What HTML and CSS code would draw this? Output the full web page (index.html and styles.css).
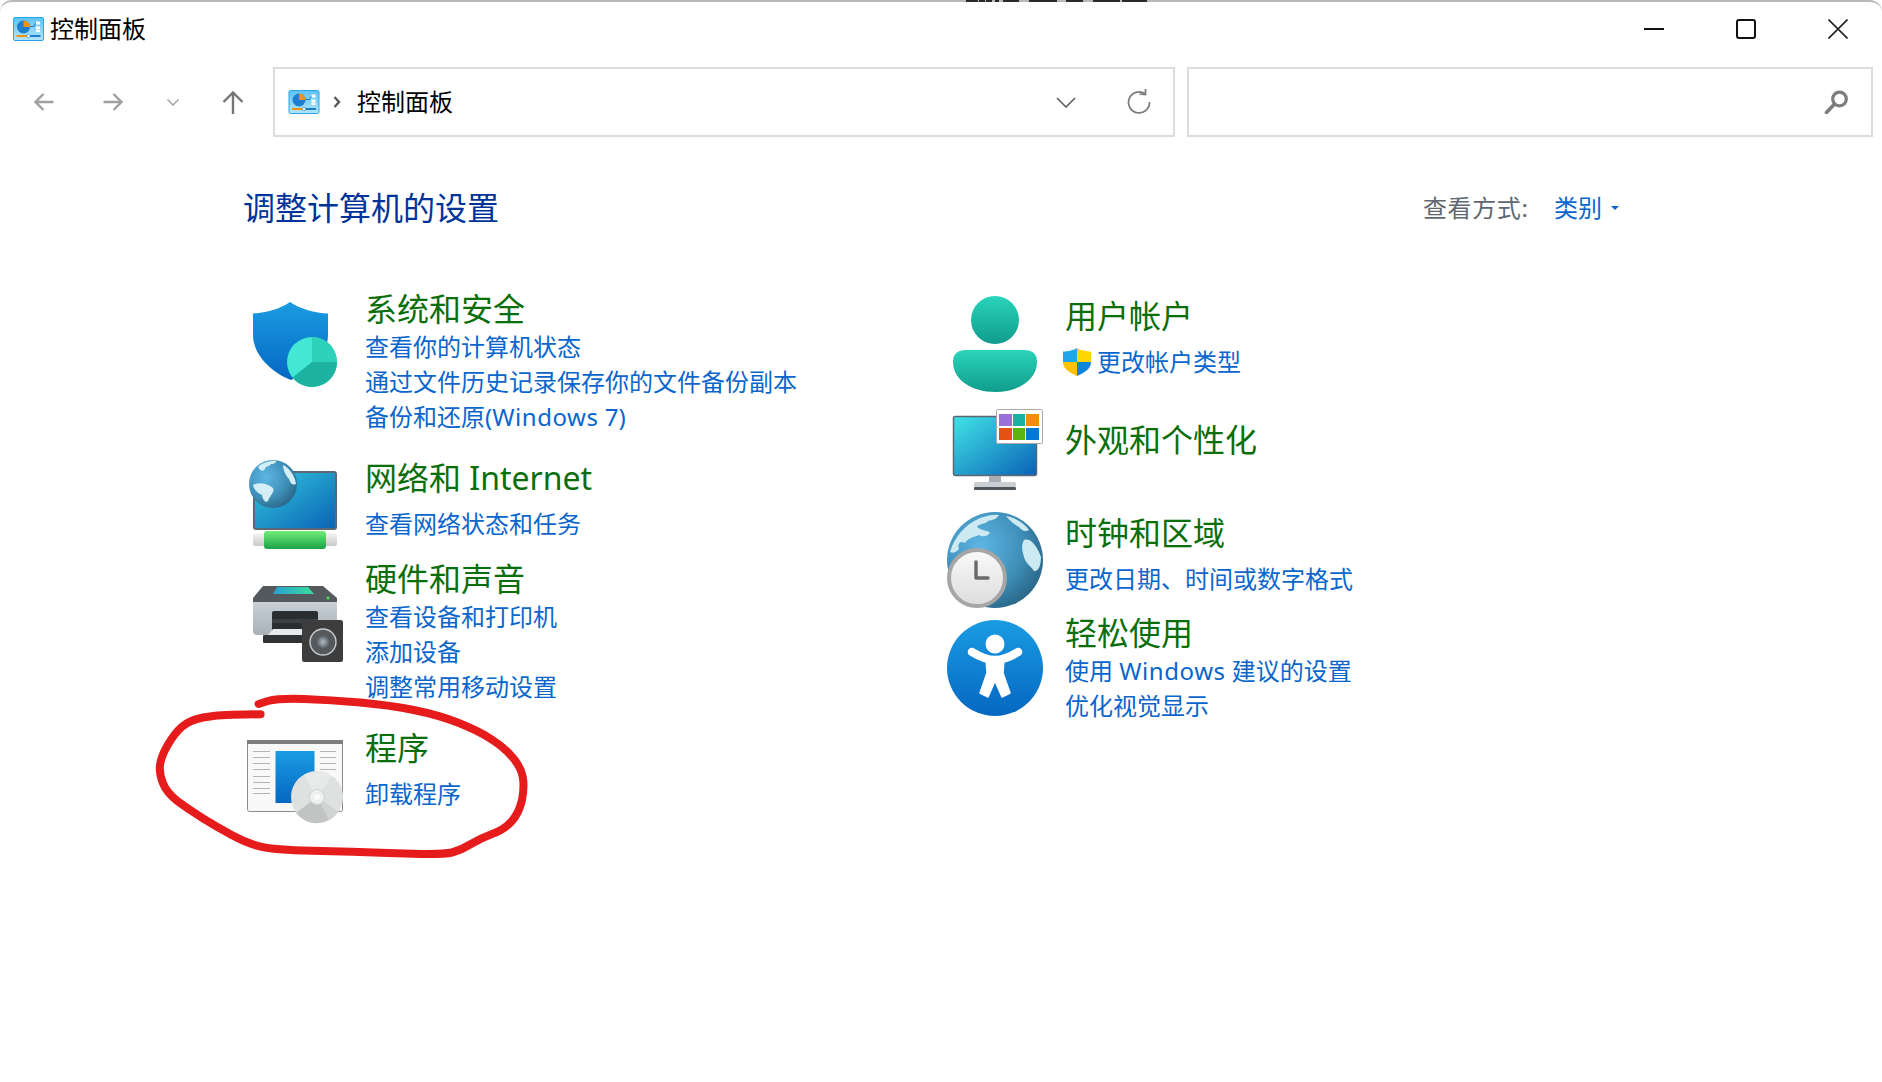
FILE: index.html
```html
<!DOCTYPE html>
<html lang="zh-CN">
<head>
<meta charset="utf-8">
<title>控制面板</title>
<link rel="stylesheet" href="styles.css">
</head>
<body>
<svg class="defs" width="0" height="0" aria-hidden="true">
  <defs>
    <linearGradient id="cpBg" x1="0" y1="0" x2="0" y2="1"><stop offset="0" stop-color="#5cc4f5"/><stop offset="1" stop-color="#b4e4f8"/></linearGradient>
    <linearGradient id="blueV" x1="0" y1="0" x2="0" y2="1"><stop offset="0" stop-color="#1a9ce2"/><stop offset="1" stop-color="#0567c2"/></linearGradient>
    <linearGradient id="screen" x1="0" y1="0" x2="1" y2="1"><stop offset="0" stop-color="#33c8dc"/><stop offset="1" stop-color="#0a62b6"/></linearGradient>
    <linearGradient id="screen2" x1="0" y1="0" x2="1" y2="1"><stop offset="0" stop-color="#40e4e6"/><stop offset="1" stop-color="#0a62b6"/></linearGradient>
    <linearGradient id="teal" x1="0" y1="0" x2="0" y2="1"><stop offset="0" stop-color="#2ad4bb"/><stop offset="1" stop-color="#109c8c"/></linearGradient>
    <linearGradient id="green" x1="0" y1="0" x2="0" y2="1"><stop offset="0" stop-color="#72ec74"/><stop offset="1" stop-color="#1ca24a"/></linearGradient>
    <linearGradient id="silver" x1="0" y1="0" x2="0" y2="1"><stop offset="0" stop-color="#f6f6f6"/><stop offset="1" stop-color="#c8c8c8"/></linearGradient>
    <linearGradient id="printBody" x1="0" y1="0" x2="0" y2="1"><stop offset="0" stop-color="#c8d0d6"/><stop offset="1" stop-color="#a9b1b8"/></linearGradient>
    <linearGradient id="printScreen" x1="0" y1="0" x2="1" y2="0"><stop offset="0" stop-color="#2a9fd0"/><stop offset="1" stop-color="#3bdc9c"/></linearGradient>
    <radialGradient id="cone"><stop offset="0" stop-color="#b0bcc4"/><stop offset="1" stop-color="#50565a"/></radialGradient>
    <radialGradient id="globe" cx="0.35" cy="0.35" r="0.8"><stop offset="0" stop-color="#5cb6e4"/><stop offset="0.55" stop-color="#3f8fb8"/><stop offset="1" stop-color="#235a78"/></radialGradient>
    <linearGradient id="clockFace" x1="0" y1="0" x2="0" y2="1"><stop offset="0" stop-color="#fafafa"/><stop offset="1" stop-color="#dcdcdc"/></linearGradient>
    <symbol id="cp-icon" viewBox="0 0 31 24">
      <rect x="0.5" y="0.5" width="30" height="23" rx="1.5" fill="url(#cpBg)" stroke="#2ba4e8"/>
      <circle cx="10.5" cy="10" r="6.5" fill="#1c7fd0"/>
      <path d="M10.500 10V3.500A6.500 6.500 0 0 1 17 10Z" fill="#f0920e"/>
      <path d="M17 9.500h4l1.500-3h2.500" fill="none" stroke="#1c7fd0"/>
      <rect x="23" y="4.500" width="4" height="3" fill="#fff"/>
      <rect x="23" y="9.500" width="4" height="3" fill="#fff"/>
      <rect x="23" y="13" width="4" height="2" fill="#fff"/>
      <rect x="3.500" y="18" width="12" height="2" fill="#f0920e"/>
      <rect x="16" y="18" width="11.500" height="2" fill="#1c7fd0"/>
      <circle cx="15.500" cy="19" r="1.700" fill="#fff" stroke="#1c7fd0" stroke-width="0.600"/>
    </symbol>
  </defs>
</svg>

<div class="window">
  <div class="top-strip"></div>

  <header class="titlebar">
    <div class="title-left">
      <svg class="cp-small"><use href="#cp-icon"/></svg>
      <span class="title-text">控制面板</span>
    </div>
    <div class="win-controls">
      <svg class="win-btn" viewBox="0 0 20 20"><path d="M0 10H20" stroke="#111" stroke-width="2"/></svg>
      <svg class="win-btn" viewBox="0 0 20 20"><rect x="1" y="1" width="18" height="18" rx="2" fill="none" stroke="#111" stroke-width="2"/></svg>
      <svg class="win-btn" viewBox="0 0 20 20"><path d="M0.500 0.500L19.500 19.500M19.500 0.500L0.500 19.500" stroke="#222" stroke-width="1.600"/></svg>
    </div>
  </header>

  <nav class="navbar">
    <div class="nav-btns">
      <svg class="nav-ic" width="20" height="20" viewBox="0 0 20 20"><path d="M19.500 10H1.500M9.500 2L1.500 10L9.500 18" fill="none" stroke="#a0a0a0" stroke-width="2.400"/></svg>
      <svg class="nav-ic" width="20" height="20" viewBox="0 0 20 20"><path d="M0.500 10H18.500M10.500 2L18.500 10L10.500 18" fill="none" stroke="#a0a0a0" stroke-width="2.400"/></svg>
      <svg class="nav-ic" width="12" height="7" viewBox="0 0 12 7"><path d="M0.500 0.500L6 6L11.500 0.500" fill="none" stroke="#a3a3a3" stroke-width="1.500"/></svg>
      <svg class="nav-ic" width="22" height="23" viewBox="0 0 22 23"><path d="M11 23V2M1.500 11L11 1.500L20.500 11" fill="none" stroke="#767676" stroke-width="2.400"/></svg>
    </div>
    <div class="address">
      <svg class="cp-addr"><use href="#cp-icon"/></svg>
      <svg class="crumb" width="8" height="12" viewBox="0 0 8 12"><path d="M1.500 1L6 6L1.500 11" fill="none" stroke="#5a5a5a" stroke-width="2.400"/></svg>
      <span class="addr-text">控制面板</span>
      <svg class="addr-chev" width="20" height="11" viewBox="0 0 20 11"><path d="M1 1L10 10L19 1" fill="none" stroke="#5f5f5f" stroke-width="1.600"/></svg>
      <svg class="refresh" width="24" height="24" viewBox="0 0 24 24"><path d="M18 3.800A10.500 10.500 0 1 0 22.500 12" fill="none" stroke="#7a7a7a" stroke-width="1.700"/><path d="M12.500 3.500L18.500 4V-1.500" transform="translate(0 0.500)" fill="none" stroke="#7a7a7a" stroke-width="1.700"/></svg>
    </div>
    <div class="search">
      <svg class="search-ic" width="26" height="24" viewBox="0 0 26 24"><circle cx="15.500" cy="9" r="6.800" fill="none" stroke="#7d7d7d" stroke-width="3.200"/><path d="M10.500 14L2.500 22.500" stroke="#7d7d7d" stroke-width="3.600" stroke-linecap="round"/></svg>
    </div>
  </nav>

  <main class="content">
    <div class="head-row">
      <h1 class="page-title">调整计算机的设置</h1>
      <div class="view-by">
        <span class="view-label">查看方式:</span>
        <a class="view-value">类别</a>
        <span class="view-caret"></span>
      </div>
    </div>

    <div class="columns">
      <section class="col col-left">
        <article class="cat gap-24">
          <svg class="cat-icon" viewBox="0 0 105 90">
            <path d="M46 13C36 20 22 24 9 24.500V46C9 64 25 82 47 91C69 82 84 64 84 46V24.500C71 24 56 20 46 13Z" fill="url(#blueV)"/>
            <circle cx="68" cy="73" r="25" fill="#42e8d3"/>
            <path d="M68 73V48A25 25 0 0 1 93 73Z" fill="#2ed1ba"/>
            <path d="M68 73H93A25 25 0 0 1 48.400 88.500Z" fill="#1db3a0"/>
          </svg>
          <div class="cat-text">
            <a class="cat-title">系统和安全</a>
            <a class="link">查看你的计算机状态</a>
            <a class="link">通过文件历史记录保存你的文件备份副本</a>
            <a class="link">备份和还原(<span class="latin">Windows</span> 7)</a>
          </div>
        </article>

        <article class="cat gap-11">
          <svg class="cat-icon" viewBox="0 0 105 90">
            <rect x="10" y="14" width="82" height="57" rx="2" fill="url(#screen)" stroke="#5b6874" stroke-width="2"/>
            <rect x="9" y="75" width="84" height="13" rx="2" fill="url(#silver)"/>
            <rect x="20" y="73" width="62" height="18" rx="3" fill="url(#green)"/>
            <circle cx="29" cy="26" r="24" fill="url(#globe)"/>
            <path d="M14 9C18 5 24 3 31 2.500C34 4 30 6 27 6C25 9 21 8 21 11C19 14 16 13 14 9ZM9 27C15 24 23 25 29 30C31 34 26 37 24 43C21 45 19 42 18 37C14 35 10 32 9 27ZM39 7C44 9 51 17 52 26C48 28 46 24 45 21C42 18 39 12 39 7Z" fill="#d4eef6"/>
          </svg>
          <div class="cat-text">
            <a class="cat-title">网络和 Internet</a>
            <a class="link link-first">查看网络状态和任务</a>
          </div>
        </article>

        <article class="cat gap-24">
          <svg class="cat-icon" viewBox="0 0 105 90">
            <path d="M19 27H79L93 39V43H9V39Z" fill="#54595e"/>
            <path d="M33 28H64L70 35H29Z" fill="url(#printScreen)"/>
            <circle cx="84" cy="39" r="1.600" fill="#3de04a"/>
            <path d="M9 43H93V72Q93 76 89 76H13Q9 76 9 72Z" fill="url(#printBody)"/>
            <rect x="28" y="52" width="46" height="24" rx="2" fill="#2a2e31"/>
            <rect x="28" y="60" width="46" height="4" fill="#3b4043"/>
            <path d="M29 70H59V76H24Z" fill="#e8e8e8"/>
            <rect x="19" y="76" width="42" height="8" rx="1" fill="#2f3335"/>
            <rect x="58" y="61" width="41" height="42" rx="2.500" fill="#3d3d3e"/>
            <circle cx="79" cy="83" r="13" fill="#55595c" stroke="#c6ccd0" stroke-width="1.400"/>
            <circle cx="79" cy="83" r="7" fill="url(#cone)"/>
          </svg>
          <div class="cat-text">
            <a class="cat-title">硬件和声音</a>
            <a class="link">查看设备和打印机</a>
            <a class="link">添加设备</a>
            <a class="link">调整常用移动设置</a>
          </div>
        </article>

        <article class="cat">
          <svg class="cat-icon" viewBox="0 0 105 90">
            <rect x="3.500" y="12.500" width="95" height="71" rx="2" fill="#f8f8f8" stroke="#8c8c8c"/>
            <rect x="3" y="12" width="96" height="4" fill="#7c7e7f"/>
            <path d="M9 23.500H26M9 29.500H26M9 35.500H26M9 41.500H26M9 48.500H26M9 54.500H26M9 60.500H26M9 65.500H26M76 23.500H92M76 29.500H92M76 35.500H92M76 41.500H92" stroke="#b4b4b4"/>
            <rect x="31.500" y="23" width="39" height="52" fill="url(#blueV)"/>
            <circle cx="73" cy="69" r="26" fill="#dfe1e1"/>
            <path d="M73 69L52 85A26 26 0 0 0 94 84Z" fill="#c2c4c4"/>
            <path d="M73 69L85 92A26 26 0 0 0 94 84Z" fill="#d2d4d4"/>
            <path d="M73 69L60 47A26 26 0 0 1 88 48Z" fill="#e8eaea"/>
            <circle cx="73" cy="69" r="7.500" fill="#eef0f0" stroke="#d0d2d2"/>
            <circle cx="73" cy="69" r="3" fill="#fafafa"/>
          </svg>
          <div class="cat-text">
            <a class="cat-title">程序</a>
            <a class="link link-first">卸载程序</a>
          </div>
        </article>
      </section>

      <section class="col col-right">
        <article class="cat gap-34">
          <svg class="cat-icon" viewBox="0 0 105 90">
            <circle cx="51" cy="24" r="24" fill="url(#teal)"/>
            <path d="M22 54H80Q93 54 93 66C93 84 74 96 51 96C28 96 9 84 9 66Q9 54 22 54Z" fill="url(#teal)"/>
          </svg>
          <div class="cat-text">
            <a class="cat-title">用户帐户</a>
            <a class="link link-shield">
              <svg class="uac" width="28" height="28" viewBox="0 0 28 28">
                <path d="M14 0C11 2 5 3.500 0 3.500V14H14Z" fill="#1ea6ea"/>
                <path d="M14 0C17 2 23 3.500 28 3.500V14H14Z" fill="#ffd600"/>
                <path d="M0 14H14V28C7 25 0 21 0 14Z" fill="#ffc200"/>
                <path d="M28 14H14V28C21 25 28 21 28 14Z" fill="#0f84da"/>
              </svg>
              <span>更改帐户类型</span>
            </a>
          </div>
        </article>

        <article class="cat gap-3">
          <svg class="cat-icon" viewBox="0 0 105 90">
            <rect x="9.500" y="-3.500" width="83" height="59" rx="2" fill="url(#screen2)" stroke="#5b6874" stroke-width="1.500"/>
            <rect x="45" y="56" width="12" height="7" fill="#a6aeb4"/>
            <rect x="30" y="62" width="42" height="5" rx="1.500" fill="#c8ced2"/>
            <rect x="30" y="67" width="42" height="3" rx="1" fill="#4e5458"/>
            <rect x="52.500" y="-10.500" width="46" height="34" rx="1" fill="#fff" stroke="#a8a8a8"/>
            <rect x="55" y="-6" width="13" height="12" fill="#9a70d8"/>
            <rect x="69" y="-6" width="12" height="12" fill="#17b2a2"/>
            <rect x="82" y="-6" width="13" height="12" fill="#f48d06"/>
            <rect x="55" y="8" width="13" height="12" fill="#e55214"/>
            <rect x="69" y="8" width="12" height="12" fill="#5bb40f"/>
            <rect x="82" y="8" width="13" height="12" fill="#0078d6"/>
          </svg>
          <div class="cat-text">
            <a class="cat-title">外观和个性化</a>
          </div>
        </article>

        <article class="cat gap-10">
          <svg class="cat-icon" viewBox="0 0 105 90">
            <circle cx="51" cy="47" r="48" fill="url(#globe)"/>
            <path d="M6 39C10 25 20 12 36 5C44 2 52 1 55 2C53 6 48 7 44 8C41 12 35 10 33 14C38 18 43 17 46 20C43 24 38 24 35 22C30 24 24 25 21 30C16 27 13 31 15 36C12 39 9 41 6 39ZM62 3C70 4 80 10 85 17C82 19 78 18 75 14C71 12 66 8 62 3ZM80 27C86 25 92 31 97 44C97 53 94 59 90 58C87 53 82 51 80 44C78 37 77 32 80 27Z" fill="#cdeaf3"/>
            <circle cx="33" cy="65" r="28" fill="url(#clockFace)" stroke="#a6a6a6" stroke-width="4"/>
            <path d="M32 49V65H44" fill="none" stroke="#6a6a6a" stroke-width="3.400" stroke-linejoin="round" stroke-linecap="round"/>
          </svg>
          <div class="cat-text">
            <a class="cat-title">时钟和区域</a>
            <a class="link link-first">更改日期、时间或数字格式</a>
          </div>
        </article>

        <article class="cat">
          <svg class="cat-icon" viewBox="0 0 105 90">
            <circle cx="51" cy="55" r="48" fill="url(#blueV)"/>
            <circle cx="51" cy="31" r="9.500" fill="#fff"/>
            <path d="M28 39Q41 47 51 47Q61 47 74 39" fill="none" stroke="#fff" stroke-width="8.500" stroke-linecap="round"/>
            <path d="M42 46H60L59 60L66 80L58 84L51 68L44 84L36 80L43 60Z" fill="#fff" stroke="#fff" stroke-width="1.500" stroke-linejoin="round"/>
          </svg>
          <div class="cat-text">
            <a class="cat-title">轻松使用</a>
            <a class="link">使用 <span class="latin">Windows</span> 建议的设置</a>
            <a class="link">优化视觉显示</a>
          </div>
        </article>
      </section>
    </div>
  </main>

  <svg class="annotation" viewBox="0 0 1882 1082" aria-hidden="true">
    <path d="M260.600 714.300L232 714.700Q216.500 715 203 717.500Q189.800 720 182 726.700Q174.400 733.300 167.700 745Q161 756.700 160 765Q159 773.300 163 783.300Q166.800 793.300 178.300 801.700Q189.800 810 203 818.300Q216.500 826.700 231.700 835Q247 843.300 260.500 846.700Q274 850 312 850.800Q350.500 851.700 396 853.300Q442 855 452 852.500Q461.500 850 471 844Q480.600 838.300 492 834Q503.600 830 511.300 821.700Q519 813.300 522 800Q524.600 786.700 522.700 776.700Q520.800 766.700 512 756.700Q503.600 746.700 490 738.300Q476.800 730 457.600 722.500Q438.500 715 413.600 710Q388.800 705 360 702.500Q331 700 304 699Q277.800 698.300 268 701L258.600 704" fill="none" stroke="#e61c1c" stroke-width="8" stroke-linecap="round" stroke-linejoin="round"/>
  </svg>
</div>
</body>
</html>
```

FILE: styles.css
```css
* { box-sizing: border-box; }

html, body {
  margin: 0;
  height: 100%;
  background: #fff;
  overflow: hidden;
}

body {
  font-family: "Noto Sans", "Noto Sans CJK SC", sans-serif;
  color: #000;
}

.defs { position: absolute; }

.window {
  position: relative;
  height: 1082px;
  background: #fff;
  border-top: 2px solid #b9b9b9;
  border-radius: 12px 12px 0 0;
}

.top-strip {
  position: absolute;
  top: -2px;
  left: 966px;
  width: 181px;
  height: 2px;
  background: linear-gradient(90deg,
    #2a2a2a 0 12px, #b9b9b9 12px 13px, #2a2a2a 13px 19px, #b9b9b9 19px 20px,
    #2a2a2a 20px 26px, #b9b9b9 26px 29px, #2a2a2a 29px 33px, #b9b9b9 33px 37px,
    #2a2a2a 37px 53px, #b9b9b9 53px 63px, #2a2a2a 63px 91px, #b9b9b9 91px 100px,
    #2a2a2a 100px 117px, #b9b9b9 117px 127px, #2a2a2a 127px 154px, #b9b9b9 154px 156px,
    #2a2a2a 156px 181px);
}

/* title bar */
.titlebar {
  height: 54px;
  display: flex;
  align-items: center;
  justify-content: space-between;
  padding: 0 34px 0 13px;
}

.title-left {
  display: flex;
  align-items: center;
  gap: 6px;
}

.cp-small { width: 31px; height: 24px; }

.title-text {
  font-size: 24px;
  line-height: 32px;
}

.win-controls {
  display: flex;
  align-items: center;
  gap: 72px;
}

.win-btn { width: 20px; height: 20px; display: block; }

/* navigation bar */
.navbar {
  margin-top: 11px;
  height: 70px;
  display: flex;
  padding: 0 9px 0 10px;
}

.nav-btns {
  flex: none;
  width: 263px;
  display: grid;
  grid-template-columns: 68px 70px 50px 70px;
  align-items: center;
  justify-items: center;
}

.nav-ic { display: block; }

.address {
  flex: none;
  width: 902px;
  display: flex;
  align-items: center;
  border: 2px solid #dcdcdc;
  padding: 0 22px 0 13px;
}

.cp-addr { width: 32px; height: 24px; }

.crumb { margin-left: 13px; }

.addr-text {
  margin-left: 16px;
  font-size: 24px;
  line-height: 32px;
}

.addr-chev { margin-left: auto; }

.refresh { margin-left: 51px; overflow: visible; }

.search {
  flex: none;
  width: 686px;
  margin-left: 12px;
  display: flex;
  align-items: center;
  justify-content: flex-end;
  border: 2px solid #dcdcdc;
  padding: 0 21px 0 0;
}

/* content */
.content {
  padding: 49px 0 0 244px;
}

.head-row {
  display: flex;
  align-items: center;
  justify-content: space-between;
  height: 44px;
  padding-right: 263px;
}

.page-title {
  margin: 0 0 0 -1px;
  font-size: 32px;
  font-weight: 400;
  line-height: 44px;
  color: #003399;
}

.view-by {
  display: flex;
  align-items: center;
  font-size: 24px;
  line-height: 32px;
}

.view-label { color: #5f6870; width: 131px; letter-spacing: 0.6px; }

.view-value { color: #0a66cc; }

.view-caret {
  margin-left: 9px;
  width: 0;
  height: 0;
  border-left: 4px solid transparent;
  border-right: 4px solid transparent;
  border-top: 4px solid #0a66cc;
}

.columns {
  display: grid;
  grid-template-columns: 700px 1fr;
  margin-top: 59px;
}

.col-right { padding-top: 7px; }

.cat {
  display: flex;
  align-items: flex-start;
  gap: 16px;
}

.gap-3 { margin-bottom: 3px; }
.gap-10 { margin-bottom: 10px; }
.gap-11 { margin-bottom: 11px; }
.gap-24 { margin-bottom: 24px; }
.gap-34 { margin-bottom: 34px; }

.cat-icon {
  flex: none;
  width: 105px;
  height: 90px;
  overflow: visible;
}

.cat-text {
  display: flex;
  flex-direction: column;
  align-items: flex-start;
}

.cat-title {
  font-size: 32px;
  line-height: 40px;
  color: #0a6e0a;
}

.link {
  font-size: 24px;
  line-height: 35px;
  color: #0a66cc;
}

.latin { letter-spacing: 0.55px; }

.link-first { margin-top: 8px; }

.link-shield {
  display: flex;
  align-items: center;
  gap: 6px;
  margin-left: -2px;
  margin-top: 8px;
}

.uac { flex: none; }

/* hand-drawn circle over the content */
.annotation {
  position: absolute;
  top: -2px;
  left: 0;
  width: 1882px;
  height: 1082px;
  pointer-events: none;
}
```
